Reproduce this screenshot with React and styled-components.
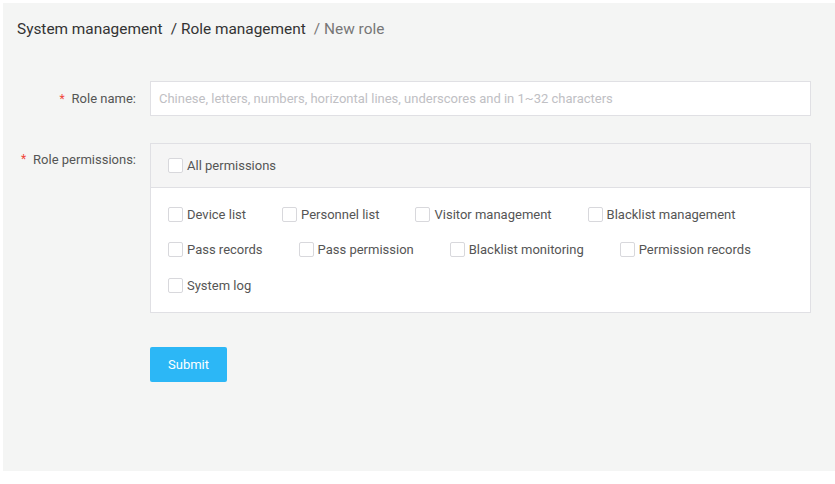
import React from "react";
import styled, { createGlobalStyle } from "styled-components";

const Global = createGlobalStyle`
  html, body { margin: 0; padding: 0; background: #ffffff; }
  body { font-family: Roboto, "Noto Sans", "Liberation Sans", sans-serif; }
  * { box-sizing: border-box; }
`;

const Page = styled.div`
  margin: 3px 0 0 3px;
  width: 832px;
  height: 468px;
  background: #f4f5f4;
`;

const Breadcrumb = styled.div`
  display: flex;
  align-items: center;
  padding: 15px 0 0 14px;
  height: 37px;
  font-size: 15.4px;
`;

const Crumb = styled.span`
  color: ${(p) => (p.$current ? "#777" : "#333")};
`;

const Sep = styled.span`
  color: ${(p) => (p.$current ? "#777" : "#333")};
  margin: 0 4px 0 8px;
`;

const Form = styled.div`
  display: grid;
  grid-template-columns: 147px 661px;
  row-gap: 27px;
  padding-top: 41px;
`;

const Label = styled.div`
  display: flex;
  justify-content: flex-end;
  align-items: ${(p) => (p.$top ? "flex-start" : "center")};
  padding-right: 14px;
  padding-top: ${(p) => (p.$top ? "9px" : "0")};
  font-size: 13px;
  color: #555;
`;

const Star = styled.span`
  color: #f0453a;
  margin-right: 7px;
  font-size: 12px;
`;

const Input = styled.input`
  width: 100%;
  height: 35px;
  border: 1px solid #e0e0e4;
  background: #fff;
  padding: 0 8px;
  font-family: inherit;
  font-size: 13px;
  color: #333;
  outline: none;
  &::placeholder { color: #c0c0c4; }
`;

const PermBox = styled.div`
  border: 1px solid #e0e0e4;
  background: #fff;
`;

const PermHead = styled.div`
  height: 44px;
  background: #f5f5f5;
  border-bottom: 1px solid #e0e0e4;
  display: flex;
  align-items: center;
  padding-left: 17px;
`;

const PermBody = styled.div`
  display: flex;
  flex-wrap: wrap;
  padding: 17px 0 18px 17px;
  row-gap: 17.5px;
`;

const Check = styled.label`
  display: inline-flex;
  align-items: center;
  margin-right: 36px;
  font-size: 13px;
  color: #555;
  height: 18px;
  cursor: pointer;
`;

const Box = styled.span`
  width: 15px;
  height: 15px;
  border: 1px solid #d8d8dc;
  border-radius: 2px;
  background: #fff;
  margin-right: 4px;
`;

const Actions = styled.div`
  grid-column: 2;
  padding-top: 7px;
`;

const Submit = styled.button`
  width: 77px;
  height: 35px;
  border: none;
  border-radius: 2px;
  background: #2cb7f6;
  color: #fff;
  font-family: inherit;
  font-size: 13px;
  cursor: pointer;
`;

const rows = [
  ["Device list", "Personnel list", "Visitor management", "Blacklist management"],
  ["Pass records", "Pass permission", "Blacklist monitoring", "Permission records"],
  ["System log"],
];

const Row = styled.div`
  display: flex;
  width: 100%;
`;

export default function App() {
  return (
    <>
      <Global />
      <Page>
        <Breadcrumb>
          <Crumb>System management</Crumb>
          <Sep>/</Sep>
          <Crumb>Role management</Crumb>
          <Sep $current>/</Sep>
          <Crumb $current>New role</Crumb>
        </Breadcrumb>
        <Form>
          <Label>
            <Star>*</Star>Role name:
          </Label>
          <Input placeholder="Chinese, letters, numbers, horizontal lines, underscores and in 1~32 characters" />
          <Label $top>
            <Star>*</Star>Role permissions:
          </Label>
          <PermBox>
            <PermHead>
              <Check>
                <Box />
                All permissions
              </Check>
            </PermHead>
            <PermBody>
              {rows.map((r, i) => (
                <Row key={i}>
                  {r.map((t) => (
                    <Check key={t}>
                      <Box />
                      {t}
                    </Check>
                  ))}
                </Row>
              ))}
            </PermBody>
          </PermBox>
          <Actions>
            <Submit>Submit</Submit>
          </Actions>
        </Form>
      </Page>
    </>
  );
}
